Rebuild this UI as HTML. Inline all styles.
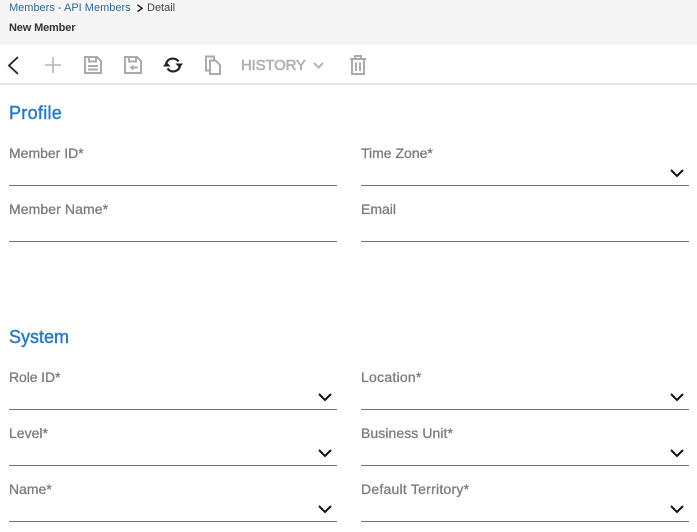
<!DOCTYPE html>
<html>
<head>
<meta charset="utf-8">
<style>
html,body{margin:0;padding:0;width:697px;height:532px;overflow:hidden;background:#fff;font-family:"Liberation Sans",sans-serif}
.a{position:absolute;white-space:nowrap}
.lab{position:absolute;font-size:14px;line-height:16px;color:#7c7c7c;white-space:nowrap;-webkit-text-stroke:.3px #7c7c7c}
.line{position:absolute;height:1px;background:#767676;width:328px}
.h{position:absolute;font-size:18px;line-height:22px;color:#2279c9;white-space:nowrap;-webkit-text-stroke:.4px #2279c9}
svg{position:absolute;overflow:visible}
</style>
</head>
<body>
<div class="a" style="left:0;top:0;width:697px;height:45px;background:#f5f5f5"></div>
<div class="a" style="left:9px;top:2px;font-size:11px;line-height:13px;color:#2f6a94">Members - API Members</div>
<svg style="left:136px;top:4px" width="8" height="9" fill="none" stroke="#222" stroke-width="1.500"><path d="M1.500 0.800L6 4.200L1.500 7.600"/></svg>
<div class="a" style="left:147px;top:2px;font-size:11px;line-height:13px;color:#444">Detail</div>
<div class="a" style="left:9px;top:22px;font-size:11px;line-height:13px;font-weight:bold;color:#333;letter-spacing:-.15px">New Member</div>
<div class="a" style="left:0;top:83px;width:697px;height:2px;background:#e6e6e6"></div>

<svg style="left:7px;top:56px" width="13" height="19" fill="none" stroke="#222" stroke-width="1.800"><path d="M11 1L2 9.500L11 18"/></svg>
<svg style="left:45px;top:57px" width="16" height="16" fill="none" stroke="#b5b5b5" stroke-width="1.600"><path d="M8 0V16M0 8H16"/></svg>
<svg style="left:84px;top:56px" width="18" height="18" fill="none" stroke="#ababab" stroke-width="2"><path d="M1 1H13L17 5V17H1Z"/><path d="M5 1V5.500H12V1"/><path d="M4 10H14M4 13.500H14"/></svg>
<svg style="left:124px;top:56px" width="18" height="18" fill="none" stroke="#ababab" stroke-width="2"><path d="M1 1H13L17 5V17H1Z"/><path d="M5 1V5.500H12V1"/><path d="M14 11.500H7.500" stroke-width="1.800"/><path d="M5.500 11.500L9.500 8.500V14.500Z" fill="#ababab" stroke="none"/></svg>
<svg style="left:163px;top:56px" width="20" height="18" fill="none" stroke="#222" stroke-width="2.200"><path d="M3 8A7 7 0 0 1 15.500 5.500"/><path d="M12.500 7.500H20L16.500 12Z" fill="#222" stroke="none"/><path d="M17 10A7 7 0 0 1 4.500 12.500"/><path d="M0 10.500H7.500L3.500 6Z" fill="#222" stroke="none"/></svg>
<svg style="left:205px;top:55px" width="16" height="20" fill="none" stroke="#ababab" stroke-width="2"><path d="M4.500 15.500H1V1.500H9V5"/><path d="M5 5.500H10.500L15 10V19H5Z"/></svg>
<div class="a" style="left:241px;top:56px;font-size:15px;line-height:19px;color:#b0b0b0;-webkit-text-stroke:.6px #b0b0b0;letter-spacing:-.2px">HISTORY</div>
<svg style="left:313px;top:62px" width="11" height="7" fill="none" stroke="#b0b0b0" stroke-width="1.900"><path d="M1 1L5.500 5.500L10 1"/></svg>
<svg style="left:350px;top:55px" width="16" height="20" fill="none" stroke="#ababab" stroke-width="2"><path d="M0 4H16"/><path d="M5 4V1H11V4"/><path d="M2 4V19H14V4"/><path d="M6 7.500V16M10 7.500V16"/></svg>

<div class="h" style="left:9px;top:102px;letter-spacing:.3px">Profile</div>
<div class="lab" style="left:9px;top:145px">Member ID*</div><div class="line" style="left:9px;top:185px"></div>
<div class="lab" style="left:361px;top:145px">Time Zone*</div><div class="line" style="left:361px;top:185px"></div>
<div class="lab" style="left:9px;top:201px;letter-spacing:.1px">Member Name*</div><div class="line" style="left:9px;top:241px"></div>
<div class="lab" style="left:361px;top:201px">Email</div><div class="line" style="left:361px;top:241px"></div>

<div class="h" style="left:9px;top:326px">System</div>
<div class="lab" style="left:9px;top:369px;letter-spacing:-.1px">Role ID*</div><div class="line" style="left:9px;top:409px"></div>
<div class="lab" style="left:361px;top:369px;letter-spacing:.25px">Location*</div><div class="line" style="left:361px;top:409px"></div>
<div class="lab" style="left:9px;top:425px">Level*</div><div class="line" style="left:9px;top:465px"></div>
<div class="lab" style="left:361px;top:425px;letter-spacing:.07px">Business Unit*</div><div class="line" style="left:361px;top:465px"></div>
<div class="lab" style="left:9px;top:481px">Name*</div><div class="line" style="left:9px;top:521px"></div>
<div class="lab" style="left:361px;top:481px;letter-spacing:.24px">Default Territory*</div><div class="line" style="left:361px;top:521px"></div>

<svg style="left:670px;top:169px" width="14" height="9" fill="none" stroke="#111" stroke-width="2"><path d="M1 1L7 7L13 1"/></svg>
<svg style="left:318px;top:393px" width="14" height="9" fill="none" stroke="#111" stroke-width="2"><path d="M1 1L7 7L13 1"/></svg>
<svg style="left:670px;top:393px" width="14" height="9" fill="none" stroke="#111" stroke-width="2"><path d="M1 1L7 7L13 1"/></svg>
<svg style="left:318px;top:449px" width="14" height="9" fill="none" stroke="#111" stroke-width="2"><path d="M1 1L7 7L13 1"/></svg>
<svg style="left:670px;top:449px" width="14" height="9" fill="none" stroke="#111" stroke-width="2"><path d="M1 1L7 7L13 1"/></svg>
<svg style="left:318px;top:505px" width="14" height="9" fill="none" stroke="#111" stroke-width="2"><path d="M1 1L7 7L13 1"/></svg>
<svg style="left:670px;top:505px" width="14" height="9" fill="none" stroke="#111" stroke-width="2"><path d="M1 1L7 7L13 1"/></svg>
</body>
</html>
